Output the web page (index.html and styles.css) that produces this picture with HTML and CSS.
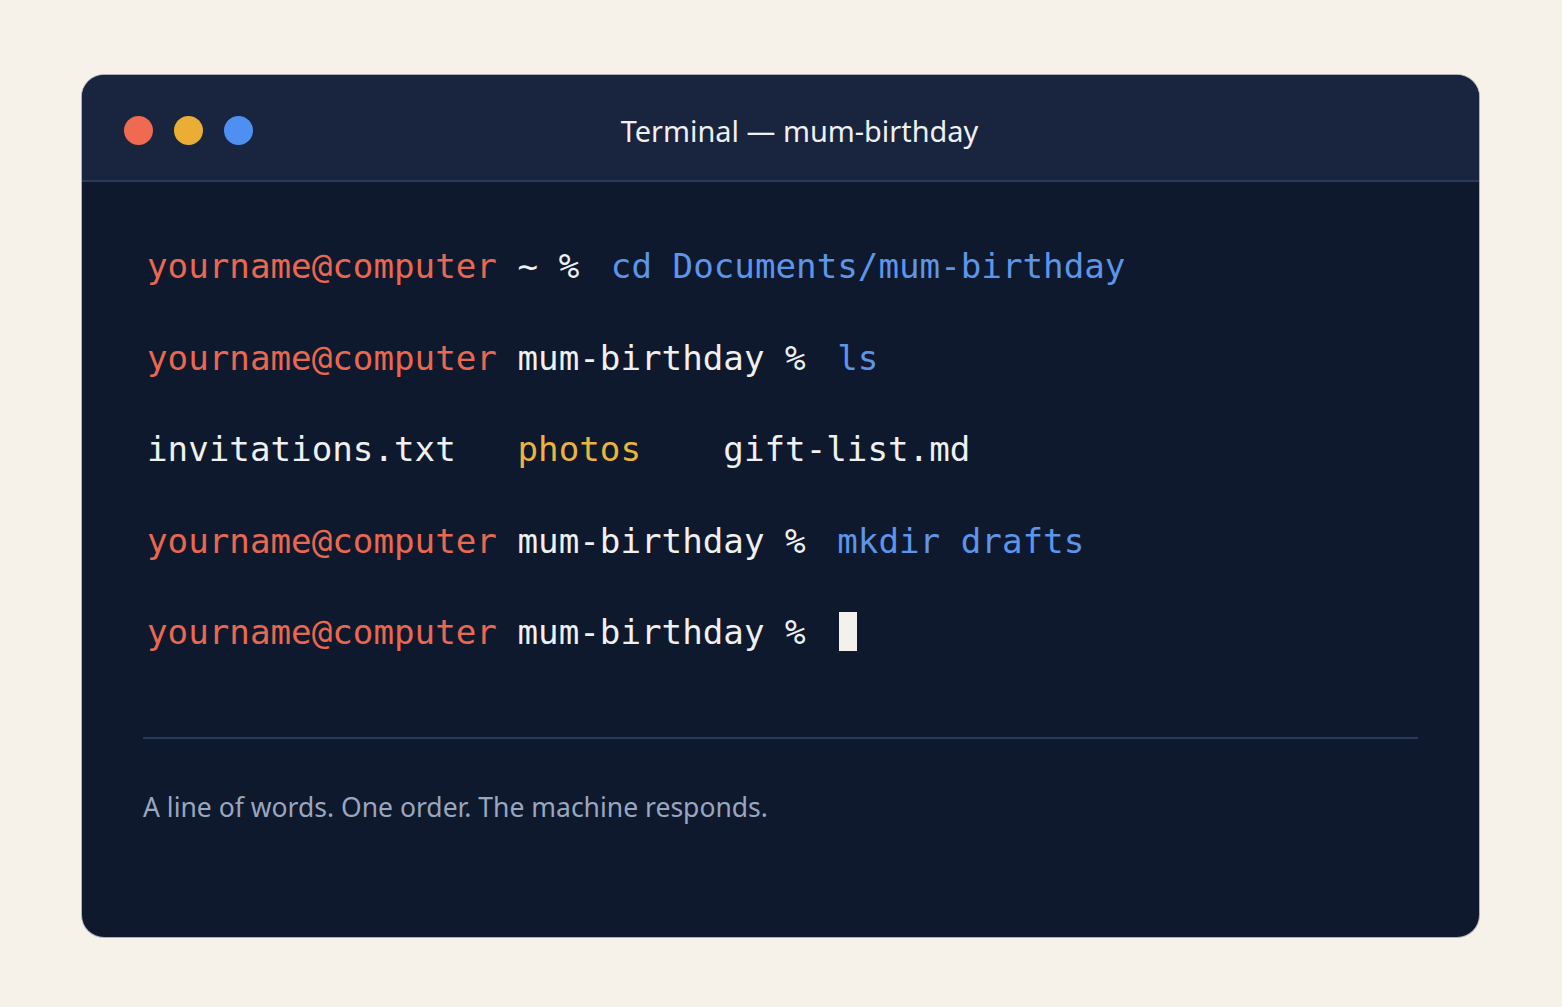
FILE: index.html
```html
<!DOCTYPE html>
<html lang="en">
<head>
<meta charset="utf-8">
<title>Terminal — mum-birthday</title>
<link rel="stylesheet" href="styles.css">
</head>
<body>
<main class="stage">
  <section class="window">
    <header class="titlebar">
      <div class="dots">
        <span class="dot dot-red"></span>
        <span class="dot dot-yellow"></span>
        <span class="dot dot-blue"></span>
      </div>
      <div class="title">Terminal — mum-birthday</div>
      <div class="spacer"></div>
    </header>
    <div class="body">
      <div class="lines">
        <div class="line"><span class="user">yourname@computer</span> <span class="path">~ % </span><span class="cmd">cd Documents/mum-birthday</span></div>
        <div class="line"><span class="user">yourname@computer</span> <span class="path">mum-birthday % </span><span class="cmd">ls</span></div>
        <div class="line"><span class="file">invitations.txt</span>   <span class="dir">photos</span>    <span class="file">gift-list.md</span></div>
        <div class="line"><span class="user">yourname@computer</span> <span class="path">mum-birthday % </span><span class="cmd">mkdir drafts</span></div>
        <div class="line"><span class="user">yourname@computer</span> <span class="path">mum-birthday % </span><span class="cursor"></span></div>
      </div>
      <hr class="divider">
      <p class="caption">A line of words. One order. The machine responds.</p>
    </div>
  </section>
</main>
</body>
</html>
```
FILE: styles.css
```css
* { box-sizing: border-box; }
html, body { margin: 0; padding: 0; }
body {
  background: #f6f1e9;
  width: 1562px;
  height: 1007px;
  overflow: hidden;
  font-family: "Noto Sans", "Open Sans", sans-serif;
}
.stage {
  padding: 75px 83px 70px 82px;
}
.window {
  width: 1397px;
  height: 862px;
  border-radius: 22px;
  background: #0e192d;
  overflow: hidden;
  box-shadow: 0 0 0 1px rgba(40, 55, 90, 0.35);
}
.titlebar {
  height: 107px;
  background: #19243f;
  border-bottom: 2px solid #2b3a58;
  display: grid;
  grid-template-columns: 1fr auto 1fr;
  align-items: center;
  padding: 6px 42px 0 42px;
}
.dots {
  display: flex;
  gap: 21px;
}
.dot {
  width: 29px;
  height: 29px;
  border-radius: 50%;
  display: block;
}
.dot-red { background: #ef6a51; }
.dot-yellow { background: #eaae36; }
.dot-blue { background: #4f8ff2; }
.title {
  color: #eef0f4;
  font-size: 28.9px;
  margin-left: 38px;
}
.body {
  padding: 39px 61px 0 61px;
}
.lines {
  padding-left: 4px;
  font-family: "DejaVu Sans Mono", monospace;
  font-size: 34.2px;
  color: #eef0f2;
}
.line {
  white-space: pre;
  height: 91.5px;
  line-height: 91.5px;
}
.user { color: #ea684f; }
.path { color: #eef0f2; }
.cmd { color: #5d95ea; margin-left: 11px; }
.dir { color: #e9b53c; }
.file { color: #eef0f2; }
.cursor {
  display: inline-block;
  width: 18px;
  height: 39px;
  background: #f3f1ec;
  margin-left: 13px;
  vertical-align: -7px;
}
.divider {
  border: 0;
  height: 2px;
  background: #2a3a5a;
  margin: 58px 0 0 0;
}
.caption {
  margin: 50px 0 0 0;
  color: #9aa6bf;
  font-size: 26.5px;
}
```
